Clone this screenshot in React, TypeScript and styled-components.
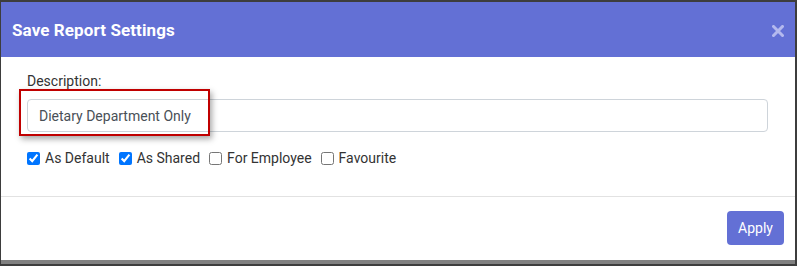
import React from "react";
import styled, { createGlobalStyle } from "styled-components";

const GlobalStyle = createGlobalStyle`
  html, body {
    margin: 0;
    padding: 0;
    background: #3d3d3d;
  }
  * { box-sizing: border-box; }
`;

const Frame = styled.div`
  width: 797px;
  height: 266px;
  padding: 2px 2px 2px 1px;
  background: #3d3d3d;
`;

const Dialog = styled.div`
  height: 262px;
  display: flex;
  flex-direction: column;
  background: #ffffff;
  border-bottom: 4px solid #808080;
  font-family: Roboto, "Liberation Sans", Arial, sans-serif;
`;

const Header = styled.div`
  height: 55px;
  flex: none;
  display: flex;
  align-items: center;
  justify-content: space-between;
  padding: 0 11px 0 11px;
  background: #6370d5;
`;

const Title = styled.h5`
  margin: 0;
  color: #ffffff;
  font-size: 17px;
  font-weight: 700;
  line-height: 20px;
  letter-spacing: 0.1px;
`;

const CloseButton = styled.button`
  border: 0;
  background: transparent;
  padding: 0;
  margin-top: 3px;
  width: 12px;
  height: 12px;
  display: flex;
  cursor: pointer;
`;

const Body = styled.div`
  height: 140px;
  flex: none;
  padding: 15px 27px 0 26px;
  border-bottom: 1px solid #e2e2e2;
`;

const Label = styled.label`
  display: block;
  font-size: 14px;
  line-height: 18px;
  color: #333333;
  margin-bottom: 9px;
`;

const FieldWrap = styled.div`
  position: relative;
`;

const TextInput = styled.input`
  display: block;
  width: 100%;
  height: 33px;
  padding: 0 11px;
  border: 1px solid #ced4da;
  border-radius: 4px;
  font-family: Roboto, "Liberation Sans", Arial, sans-serif;
  font-size: 14px;
  color: #495057;
  background: #fff;
  outline: none;
`;

const Highlight = styled.div`
  position: absolute;
  left: -8px;
  top: -10px;
  width: 191px;
  height: 47px;
  border: 2px solid #c00000;
  box-shadow: 2px 3px 6px rgba(0, 0, 0, 0.35);
  pointer-events: none;
`;

const CheckRow = styled.div`
  display: flex;
  align-items: center;
  gap: 9px;
  margin-top: 17px;
  height: 18px;
`;

const CheckItem = styled.label`
  display: flex;
  align-items: center;
  gap: 5px;
  font-size: 14px;
  line-height: 18px;
  color: #333333;
`;

const Box = styled.input`
  width: 13px;
  height: 13px;
  margin: 0;
`;

const Footer = styled.div`
  flex: 1;
  display: flex;
  justify-content: flex-end;
  align-items: flex-start;
  padding: 14px 11px 0 0;
`;

const ApplyButton = styled.button`
  height: 34px;
  padding: 0 11px;
  border: 0;
  border-radius: 4px;
  background: #6370d5;
  color: #ffffff;
  font-family: Roboto, "Liberation Sans", Arial, sans-serif;
  font-size: 14px;
  cursor: pointer;
`;

const options = [
  { label: "As Default", checked: true },
  { label: "As Shared", checked: true },
  { label: "For Employee", checked: false },
  { label: "Favourite", checked: false },
];

export default function App() {
  return (
    <>
      <GlobalStyle />
      <Frame>
        <Dialog>
          <Header>
            <Title>Save Report Settings</Title>
            <CloseButton aria-label="Close">
              <svg width="12" height="12" viewBox="0 0 12 12">
                <path
                  d="M1.5 1.5 L10.5 10.5 M10.5 1.5 L1.5 10.5"
                  stroke="#b4b9ee"
                  strokeWidth="3"
                  strokeLinecap="square"
                />
              </svg>
            </CloseButton>
          </Header>
          <Body>
            <Label>Description:</Label>
            <FieldWrap>
              <TextInput defaultValue="Dietary Department Only" />
              <Highlight />
            </FieldWrap>
            <CheckRow>
              {options.map((o) => (
                <CheckItem key={o.label}>
                  <Box type="checkbox" defaultChecked={o.checked} />
                  {o.label}
                </CheckItem>
              ))}
            </CheckRow>
          </Body>
          <Footer>
            <ApplyButton>Apply</ApplyButton>
          </Footer>
        </Dialog>
      </Frame>
    </>
  );
}
